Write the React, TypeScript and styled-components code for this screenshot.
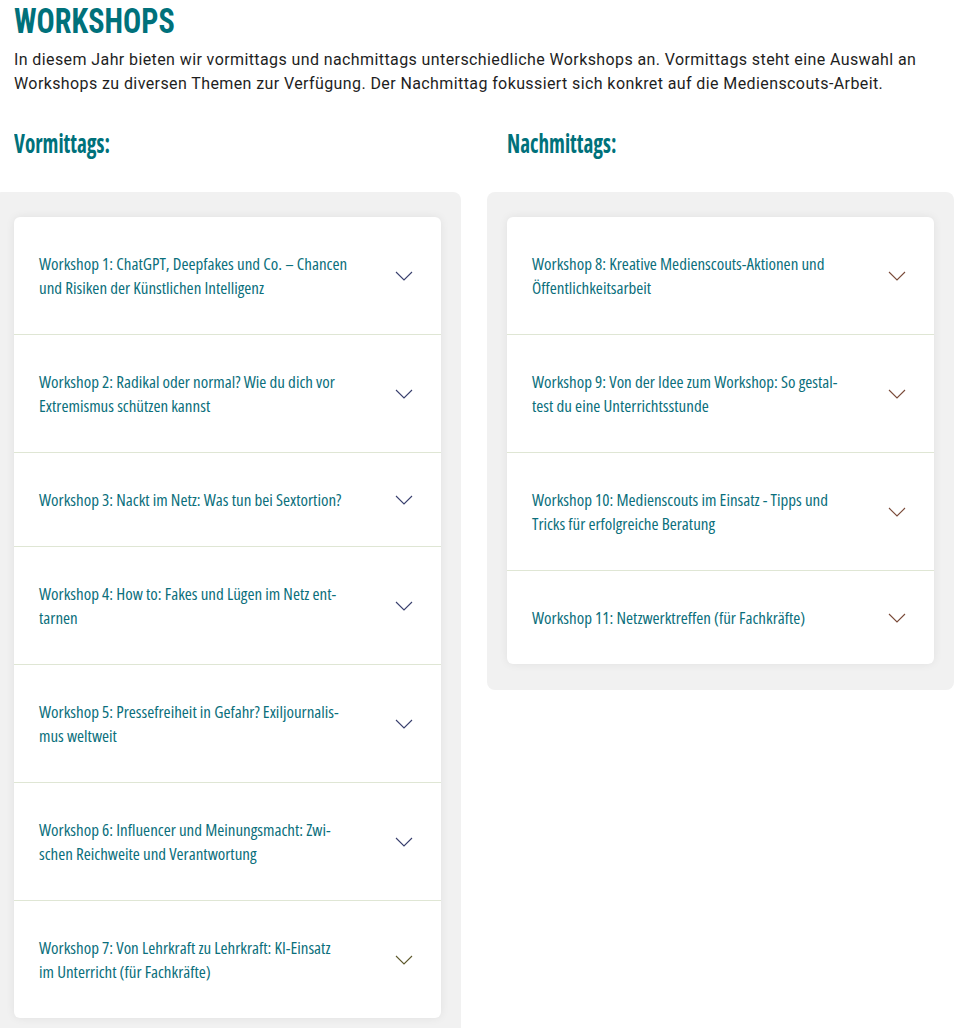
import React from "react";
import styled, { createGlobalStyle } from "styled-components";

const GlobalStyle = createGlobalStyle`
  html, body { margin: 0; padding: 0; background: #ffffff; }
  body { font-family: "Roboto", "Liberation Sans", sans-serif; }
`;

const Page = styled.div`
  width: 940px;
  padding-left: 14px;
  box-sizing: content-box;
`;

const Title = styled.h1`
  margin: 0;
  font-family: "Roboto", "Open Sans", sans-serif;
  font-stretch: 75%;
  font-weight: 700;
  font-size: 35.5px;
  line-height: 42px;
  color: #00717b;
  span {
    display: inline-block;
    transform: scaleX(0.85);
    transform-origin: left center;
  }
`;

const Intro = styled.p`
  margin: 6px 0 0;
  font-family: "Roboto", sans-serif;
  font-size: 16px;
  line-height: 24px;
  color: #1e1e1e;
  letter-spacing: 0.4px;
`;

const Columns = styled.div`
  display: grid;
  grid-template-columns: 467px 467px;
  column-gap: 26px;
  margin-left: -20px;
  margin-top: 32px;
  align-items: start;
`;

const Column = styled.section`
  display: flex;
  flex-direction: column;
`;

const ColumnHeading = styled.h2`
  margin: 0 0 34px;
  padding-left: 20px;
  font-family: "Open Sans", "Roboto", sans-serif;
  font-stretch: 75%;
  font-weight: 700;
  font-size: 27px;
  line-height: 30px;
  color: #00717b;
  span {
    display: inline-block;
    transform: scaleX(0.785);
    transform-origin: left center;
  }
`;

const Panel = styled.div`
  background: #f1f1f1;
  border-radius: 8px;
  padding: 25px 20px 26px;
`;

const Card = styled.div`
  background: #ffffff;
  border-radius: 6px;
  box-shadow: 0 0 10px rgba(0, 0, 0, 0.07);
  overflow: hidden;
`;

const Row = styled.div`
  display: flex;
  align-items: center;
  justify-content: space-between;
  gap: 20px;
  padding: 35px 28px 34px 25px;
  border-bottom: 1px solid #dfe6d4;
  &:last-child { border-bottom: none; }
`;

const RowLabel = styled.span`
  font-family: "Open Sans", "Roboto", sans-serif;
  font-stretch: 75%;
  font-weight: 400;
  font-size: 17px;
  line-height: 24px;
  color: #0b6f7c;
  white-space: nowrap;
`;

const ChevronIcon = styled.svg<{ $tone: string }>`
  flex: none;
  width: 18px;
  height: 10px;
  stroke: ${(p) => p.$tone};
  fill: none;
`;

const Chevron = ({ tone }: { tone: string }) => (
  <ChevronIcon $tone={tone} viewBox="0 0 18 10">
    <polyline points="1,1 9,9 17,1" strokeWidth="1.1" />
  </ChevronIcon>
);

type Item = { lines: string[]; tone: string };

const morning: Item[] = [
  { lines: ["Workshop 1: ChatGPT, Deepfakes und Co. – Chancen", "und Risiken der Künstlichen Intelligenz"], tone: "#39406e" },
  { lines: ["Workshop 2: Radikal oder normal? Wie du dich vor", "Extremismus schützen kannst"], tone: "#39406e" },
  { lines: ["Workshop 3: Nackt im Netz: Was tun bei Sextortion?"], tone: "#39406e" },
  { lines: ["Workshop 4: How to: Fakes und Lügen im Netz ent-", "tarnen"], tone: "#39406e" },
  { lines: ["Workshop 5: Pressefreiheit in Gefahr? Exiljournalis-", "mus weltweit"], tone: "#39406e" },
  { lines: ["Workshop 6: Influencer und Meinungsmacht: Zwi-", "schen Reichweite und Verantwortung"], tone: "#39406e" },
  { lines: ["Workshop 7: Von Lehrkraft zu Lehrkraft: KI-Einsatz", "im Unterricht (für Fachkräfte)"], tone: "#5f5a2e" },
];

const afternoon: Item[] = [
  { lines: ["Workshop 8: Kreative Medienscouts-Aktionen und", "Öffentlichkeitsarbeit"], tone: "#7a4b3a" },
  { lines: ["Workshop 9: Von der Idee zum Workshop: So gestal-", "test du eine Unterrichtsstunde"], tone: "#7a4b3a" },
  { lines: ["Workshop 10: Medienscouts im Einsatz - Tipps und", "Tricks für erfolgreiche Beratung"], tone: "#7a4b3a" },
  { lines: ["Workshop 11: Netzwerktreffen (für Fachkräfte)"], tone: "#7a4b3a" },
];

const WorkshopList = ({ items }: { items: Item[] }) => (
  <Panel>
    <Card>
      {items.map((it, i) => (
        <Row key={i}>
          <RowLabel>
            {it.lines.map((l, j) => (
              <React.Fragment key={j}>
                {j > 0 && <br />}
                {l}
              </React.Fragment>
            ))}
          </RowLabel>
          <Chevron tone={it.tone} />
        </Row>
      ))}
    </Card>
  </Panel>
);

export default function App() {
  return (
    <>
      <GlobalStyle />
      <Page>
        <Title><span>WORKSHOPS</span></Title>
        <Intro>
          In diesem Jahr bieten wir vormittags und nachmittags unterschiedliche Workshops an. Vormittags steht eine Auswahl an
          <br />
          Workshops zu diversen Themen zur Verfügung. Der Nachmittag fokussiert sich konkret auf die Medienscouts-Arbeit.
        </Intro>
        <Columns>
          <Column>
            <ColumnHeading><span>Vormittags:</span></ColumnHeading>
            <WorkshopList items={morning} />
          </Column>
          <Column>
            <ColumnHeading><span>Nachmittags:</span></ColumnHeading>
            <WorkshopList items={afternoon} />
          </Column>
        </Columns>
      </Page>
    </>
  );
}
